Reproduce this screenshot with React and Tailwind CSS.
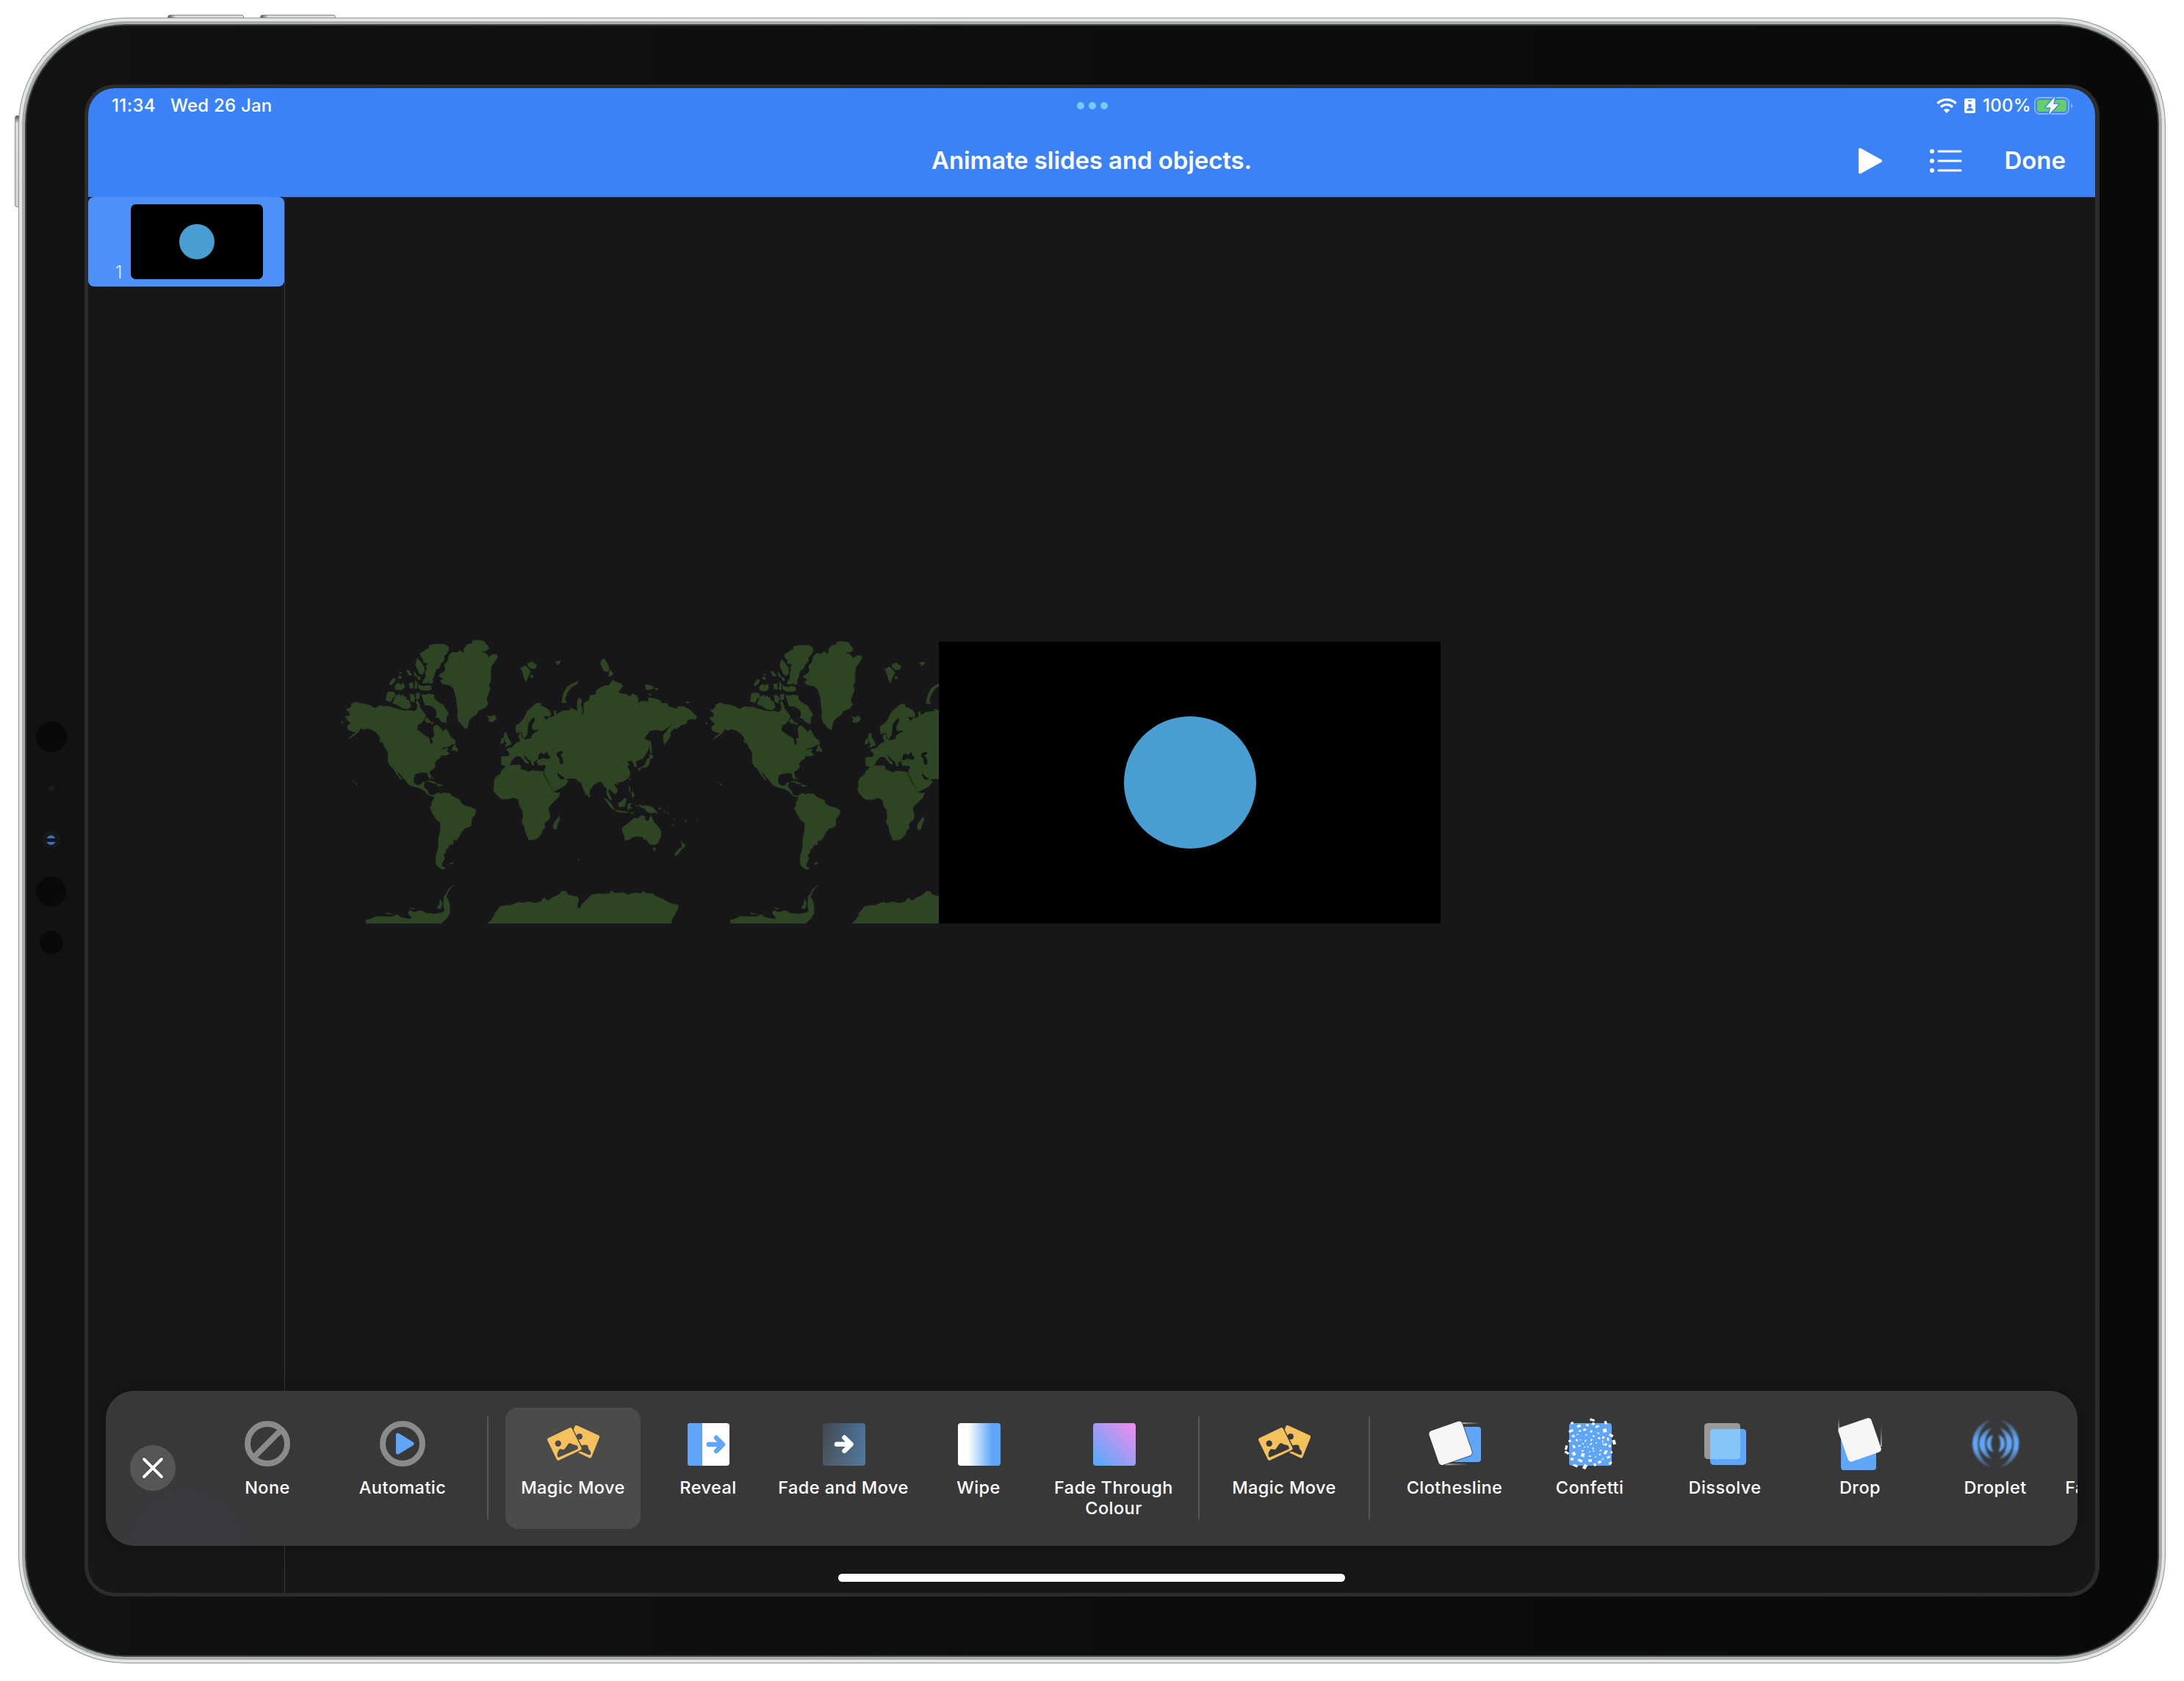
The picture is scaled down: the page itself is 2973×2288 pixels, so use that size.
import React from "react";

const LAND = [
  // North America
  "M92,345 L103,342 112,332 110,325 130,316 145,322 165,324 185,330 205,342 225,331 240,334 258,333 275,340 295,345 320,352 345,350 358,355 370,348 372,330 365,318 372,308 380,325 383,340 392,352 400,362 406,372 398,390 388,402 375,408 370,430 385,440 405,455 418,462 424,488 430,490 433,475 428,465 440,458 438,440 435,425 440,412 452,410 465,425 475,436 485,425 497,445 505,460 520,472 523,485 510,490 490,500 475,502 466,512 480,507 494,505 488,518 500,528 485,535 466,533 462,545 450,552 440,565 444,578 436,590 422,598 420,608 427,622 422,632 414,618 412,605 395,604 380,606 362,612 357,632 360,648 372,656 386,655 392,645 402,642 396,656 402,668 412,678 415,690 425,697 437,697 432,702 420,698 408,690 402,680 385,670 370,665 350,660 335,650 325,636 312,622 300,606 290,596 296,612 312,632 305,632 290,610 278,590 264,576 256,560 256,520 248,508 240,490 228,475 222,455 208,440 190,428 170,424 155,430 150,420 140,438 120,455 98,468 115,452 130,440 118,438 98,430 95,415 110,402 100,395 88,380 90,375 105,372 103,358 92,350Z",
  "M222,470l6,4-2,10z M238,492l12,8 8,12-10-4z M512,502l8,-14 4,12 8,8 -2,10 -10,-4 -12,0z",
  // Arctic archipelago
  "M383,118 L400,108 408,100 418,98 420,85 440,80 480,80 495,90 496,105 488,120 478,128 478,145 465,160 458,178 445,185 440,205 432,225 418,235 405,240 392,238 398,225 405,215 404,195 410,180 405,170 415,160 405,155 395,155 395,140 385,130Z",
  "M372,138 L382,148 390,160 400,175 400,190 392,205 380,200 372,180 364,165Z",
  "M376,244 l10,6 12,2 10,-4 18,3 3,13 -15,6 -25,-2 -12,-8z M418,232l16,-4 0,10 -14,4z",
  "M262,240 l14,-20 10,2 -8,18 -12,8z M283,250 l14,-12 8,8 12,-8 5,18 -12,12 -25,-3z M340,240l14,-4 2,24 -14,0z M328,185 l12,4 12,18 -14,0z M297,210l8,0 6,6 -6,5 -8,-2z M300,196 l6,0 4,5 -8,0z M364,228 l8,14 -2,20 -8,0z M356,190 l8,8 8,15 -10,-3z M372,210 l10,4 2,12 -10,-2z",
  "M258,274 l22,2 6,12 -12,14 -8,14 -18,-6 4,-30z",
  "M285,292 l18,-8 4,10 8,-8 4,10 6,-4 4,14 12,6 6,24 -14,10 -20,-4 -20,-14 -18,-6 6,-16z",
  "M342,284l14,2 8,14 -6,18 -12,-6z M366,282l16,-2 -2,22 -12,4z",
  "M388,285 l18,2 12,-4 20,4 0,14 14,14 12,8 12,6 6,14 8,10 6,14 -8,8 -2,28 -20,-8 -10,-14 -12,-2 6,-14 -6,-20 -20,-14 -22,-2 -6,-16z",
  "M402,388 l10,-8 6,10 8,8 -10,4 -10,-4z M425,398l12,2 -8,8z",
  // Greenland and Iceland
  "M455,208 L475,195 L483,185 478,165 492,150 497,125 510,113 530,115 540,105 555,118 558,95 572,80 588,78 590,67 605,64 635,68 648,85 656,97 645,107 620,110 640,116 650,125 652,135 670,122 685,122 690,132 680,150 665,168 662,195 662,232 655,245 660,262 650,290 645,305 652,325 640,340 615,350 605,368 588,378 578,390 572,410 568,427 555,420 545,405 535,395 530,375 532,350 528,330 528,320 525,295 515,262 500,248 472,243 462,230 475,222z",
  "M648,372 l12,4 10,-4 5,-3 8,8 0,10 -14,11 -16,-3 2,-12z",
  // South America and the Caribbean
  "M437,697 L448,690 460,686 462,694 475,688 500,690 510,702 525,708 540,715 545,730 560,740 585,746 603,757 602,772 587,792 585,820 578,826 560,832 548,845 540,862 528,880 514,882 514,897 498,900 494,912 484,920 484,932 474,940 480,955 472,970 468,985 484,996 470,1000 452,988 445,975 446,945 455,910 456,870 462,845 464,810 446,795 432,770 422,748 430,735 428,725 438,710z",
  "M502,973 l10,-2 0,6 -10,2z M408,640 l14,-3 15,5 12,7 -14,0 -12,-7z M448,652 l18,2 6,3 -18,3z M117,640l6,3-2,3z M128,647l7,5-5,2z M432,622l4,6-4,2z",
  // Africa
  "M720,580 L738,575 778,573 782,582 780,590 800,596 812,602 825,596 868,600 872,615 885,640 900,665 908,682 925,688 937,685 930,705 910,725 895,740 890,755 895,770 896,792 880,806 874,815 876,830 866,840 862,855 848,872 835,878 812,880 808,868 800,850 795,825 785,805 790,785 788,758 775,738 772,715 752,706 735,712 705,713 690,700 675,682 673,670 676,655 675,640 684,622 700,610 705,596 715,588z",
  "M932,783 l3,12 -8,22 -5,18 -10,2 -4,-12 4,-16 8,-10z",
  // Eurasia
  "M705,572 L703,540 L728,538 735,535 735,522 723,512 728,506 745,502 755,492 765,482 778,478 778,470 772,458 776,446 782,444 785,462 800,470 820,466 828,448 850,434 850,428 830,432 825,415 838,390 836,378 826,382 810,405 808,430 805,450 795,465 788,455 786,440 775,440 765,445 761,428 762,412 775,404 790,388 798,372 808,352 822,340 838,325 850,320 860,322 860,332 880,340 895,352 900,368 895,375 880,374 870,372 875,382 884,392 890,380 905,378 914,372 912,355 920,352 922,368 940,355 960,352 978,350 975,340 1000,350 1007,355 1003,335 1005,310 1013,298 1022,310 1018,330 1025,345 1020,375 1030,360 1030,320 1050,310 1055,290 1078,285 1078,270 1095,258 1115,250 1130,248 1145,225 1155,235 1175,240 1185,250 1175,265 1165,275 1180,283 1200,285 1205,292 1218,290 1220,283 1240,290 1245,305 1245,320 1260,312 1285,315 1285,298 1310,302 1330,310 1340,322 1360,322 1365,335 1400,345 1402,335 1425,335 1445,345 1462,362 1470,368 1477,378 1470,388 1455,385 1440,390 1435,405 1415,410 1400,425 1385,425 1372,440 1372,455 1360,475 1350,490 1344,470 1345,450 1355,440 1375,410 1378,405 1360,422 1340,435 1315,430 1290,435 1280,450 1268,466 1285,475 1290,490 1285,510 1275,530 1265,545 1245,555 1235,560 1240,580 1228,580 1225,565 1218,555 1200,558 1210,572 1202,580 1212,600 1212,615 1205,628 1188,640 1168,645 1158,645 1150,655 1162,672 1162,685 1152,692 1140,680 1130,672 1125,680 1135,700 1142,720 1130,712 1120,690 1122,672 1112,662 1105,648 1095,640 1080,648 1068,655 1055,675 1052,690 1040,698 1030,675 1022,655 1020,645 1008,640 1000,630 980,628 960,630 968,640 955,658 935,670 910,682 902,665 890,640 875,612 873,600 880,580 876,574 850,574 845,562 848,550 838,558 830,562 835,575 825,574 820,558 805,545 790,528 795,545 810,560 812,568 800,566 790,552 778,538 765,537 755,545 745,556 740,570 728,578 715,577z",
  // Islands of the North Atlantic and Arctic Ocean
  "M718,440 l8,4 2,14 12,20 4,12 -16,6 -10,4 6,-14 -6,-12 -4,-16z M705,465 l10,-2 -2,20 -12,4 2,-12z",
  "M780,178 l20,-10 10,12 10,12 -10,20 -8,22 -8,-14 -6,-24z M808,158 l18,-6 18,14 -6,14 -18,0 -10,-10z M820,205 l10,4 -2,10 -8,-2z M916,152l20,-4 0,8 -10,10 -4,-8z",
  "M1007,232 l-2,10 -22,12 -16,20 -12,30 6,16 -18,-2 6,-34 14,-28 20,-14z",
  "M1110,138 l14,22 6,20 -6,14 -16,-6 -12,-30 4,-12z M1132,184 l16,16 -10,10 -10,2z",
  "M1272,245 l14,2 16,6 0,10 -24,4z M1308,260l16,2 -4,8z M1286,282l12,4-8,4z M1434,316l14,0 -6,6 -8,-2z M70,396l10,4-4,4z",
  // East and South-East Asia
  "M1288,472 l6,4 4,30 0,28 -6,-14 -2,-24z M1288,532 l16,4 -2,10 -12,2z M1292,545 l-4,28 -8,8 -20,4 -12,12 -4,-8 16,-8 14,-12 6,-20z",
  "M1210,628l4,0-2,12z M1050,690l6,8 -4,8-5,-4z M1208,658l6,8 -2,14 6,10 -8,-8z M1222,680 l8,18 -8,10 -2,-12z M1158,650l8,-2-4,8z",
  "M1110,708 l14,8 14,16 14,24 -8,-2 -16,-18z M1152,757 l24,4 30,4 -2,4 -40,-4z M1165,730 l14,-6 12,-16 8,6 -4,16 -4,14 -22,0z M1204,732l16,-2 -8,8 8,14 -10,-4 -2,10 -4,-2z M1212,768l18,0 -10,4z",
  "M1250,735 l12,6 14,-2 24,6 14,14 10,14 -14,-6 -14,4 -16,-6 -10,-14 -18,-6z M1330,748l8,4-14,4z M1345,758l8,6-5,1z M1360,767l8,4-5,1z M1387,792l4,5-3,2z M1378,814l10,7-4,1z M1438,797l-8,10-1,-4z M1478,798l4,2-3,2z M1236,738l10,2-6,4z",
  // Oceania
  "M1182,828 L1205,812 1220,798 1232,790 1245,792 1255,780 1272,782 1270,795 1285,805 1290,790 1295,778 1300,792 1308,808 1322,822 1335,842 1335,865 1328,880 1320,895 1305,900 1290,896 1282,885 1274,875 1270,880 1262,868 1245,865 1225,868 1210,878 1192,882 1190,862 1182,845z",
  "M1304,912l10,0-3,14-6,-4z M1414,884 l8,10 10,6 -8,14 -8,2 2,-14z M1410,912 l8,4 -14,20 -8,8 -8,-2 4,-10z M1007,958l5,2-3,5z",
  // Antarctica
  "M168,1207 L185,1203 210,1192 270,1193 293,1184 305,1195 325,1200 347,1203 348,1195 336,1180 340,1167 360,1175 385,1168 410,1180 440,1182 465,1178 480,1170 475,1150 477,1110 485,1100 495,1080 516,1064 500,1080 490,1100 486,1112 496,1128 500,1150 500,1180 488,1200 466,1221 172,1221z",
  "M450,1156 l10,-16 2,-18 8,12 -2,20 -8,8z M342,1157l20,2 -6,4z M248,1177l26,4 -20,2z",
  "M648,1221 L665,1206 678,1185 676,1180 690,1165 700,1150 720,1148 745,1145 775,1133 785,1138 810,1132 840,1138 862,1130 872,1116 888,1128 910,1112 930,1104 945,1088 960,1090 968,1104 1005,1112 1010,1120 1003,1155 1015,1160 1022,1142 1045,1120 1060,1104 1080,1100 1115,1100 1130,1100 1140,1087 1150,1098 1180,1094 1205,1103 1230,1096 1255,1098 1268,1090 1275,1098 1302,1098 1310,1108 1340,1120 1365,1135 1385,1142 1402,1145 1404,1155 1395,1175 1380,1200 1376,1221z",
].join(" ");

const INLAND_SEAS =
  "M848,548 L852,530 862,522 870,530 885,518 888,530 898,542 890,550 870,545 855,552z M925,522 l18,-6 6,8 -12,8 10,16 2,18 -8,6 -8,-10 0,-16 -10,-10z M928,605 l14,14 12,8 -4,6 -14,-4 -10,-16z";

function WorldMap() {
  return (
    <svg className="block h-[390px] w-[838px]" viewBox="440 868 838 390">
      <defs>
        <g id="world">
          <path d={LAND} fill="#2e4524" stroke="#2e4524" strokeWidth="1.5" strokeLinejoin="round" />
          <path d={INLAND_SEAS} fill="#171719" />
        </g>
        <clipPath id="mapclip">
          <rect x="440" y="868" width="838" height="389" />
        </clipPath>
      </defs>
      <g clipPath="url(#mapclip)">
        <use href="#world" transform="translate(440 850) scale(0.34439 0.33333)" />
        <use href="#world" transform="translate(935.9 851.7) scale(0.34439 0.3319)" />
      </g>
    </svg>
  );
}

const BLUE = "#5fa6f8";

function NoneIcon() {
  return (
    <g fill="none" stroke="#8a8a8a" strokeWidth="8">
      <circle cx="40" cy="40" r="27" />
      <path d="M21 59L59 21" />
    </g>
  );
}

function AutomaticIcon() {
  return (
    <g>
      <circle cx="40" cy="40" r="27" fill="none" stroke="#8a8a8a" strokeWidth="8" />
      <path d="M33.4 28L53 40 33.4 52Z" fill={BLUE} stroke={BLUE} strokeWidth="5" strokeLinejoin="round" />
    </g>
  );
}

function MagicMoveIcon({ id }) {
  return (
    <g>
      <mask id={id + "b"}>
        <rect width="80" height="80" fill="white" />
        <path d="M7 34.5L36.2 20.2 49.6 46.6 20 60.5Z" fill="black" stroke="black" strokeWidth="7.5" strokeLinejoin="round" />
        <circle cx="48.8" cy="30.3" r="4.1" fill="black" />
        <path d="M44 45L52 42.3Q57 40.8 60 42.3L61.4 47.5Q65 50.5 64 54.2 63.2 56 60.8 55L48 49.6Z" fill="black" />
      </mask>
      <mask id={id + "f"}>
        <rect width="80" height="80" fill="white" />
        <circle cx="19.7" cy="39.7" r="4.2" fill="black" />
        <path d="M18.6 56.5Q18.6 50 22 47.2L28 47.9Q31 44 34 39.8 36 38.2 38.6 40.4L45.4 42.4Q48.4 46 45.6 47.8L21.4 58.3Q19 59.2 18.6 56.5Z" fill="black" />
      </mask>
      <path d="M44.6 17.6L73.6 30.8 63 57 36 44Z" fill="#f5c15c" stroke="#f5c15c" strokeWidth="5" strokeLinejoin="round" mask={`url(#${id}b)`} />
      <path d="M7.6 34.6L36.4 20.7 49 46.4 20 60.2Z" fill="#f5c15c" stroke="#f5c15c" strokeWidth="5" strokeLinejoin="round" mask={`url(#${id}f)`} />
    </g>
  );
}

function RevealIcon() {
  return (
    <g>
      <rect x="12" y="12" width="57" height="58" rx="4" fill="#fff" />
      <path d="M32 12H16a4 4 0 0 0-4 4V66a4 4 0 0 0 4 4H32Z" fill={BLUE} />
      <path d="M40.8 41H59M51 32L60 41 51 50" fill="none" stroke={BLUE} strokeWidth="6.4" strokeLinecap="round" strokeLinejoin="round" />
    </g>
  );
}

function FadeMoveIcon() {
  return (
    <g>
      <linearGradient id="fm1" x1="0" y1="0.1" x2="1" y2="0">
        <stop offset="0" stopColor="#3f484e" />
        <stop offset="1" stopColor="#4a7199" />
      </linearGradient>
      <linearGradient id="fm2" x1="0" y1="0" x2="0" y2="1">
        <stop offset="0" stopColor="#8aa4c8" stopOpacity="0" />
        <stop offset="1" stopColor="#8aa4c8" stopOpacity="0.2" />
      </linearGradient>
      <rect x="12" y="12" width="58" height="58" rx="4" fill="url(#fm1)" />
      <rect x="12" y="12" width="58" height="58" rx="4" fill="url(#fm2)" />
      <path d="M31 40.7H49.5M41.5 31.7L50.6 40.7 41.5 49.7" fill="none" stroke="#fff" strokeWidth="6.4" strokeLinecap="round" strokeLinejoin="round" />
    </g>
  );
}

function WipeIcon() {
  return (
    <g>
      <linearGradient id="wp">
        <stop offset="0.24" stopColor="#fff" />
        <stop offset="0.8" stopColor={BLUE} />
      </linearGradient>
      <rect x="12" y="12" width="58" height="58" rx="4" fill="url(#wp)" />
    </g>
  );
}

function FadeColourIcon() {
  return (
    <g>
      <linearGradient id="fc" x1="0" y1="1" x2="1" y2="0">
        <stop offset="0.1" stopColor="#5fa8f9" />
        <stop offset="0.9" stopColor="#e390ef" />
      </linearGradient>
      <rect x="12" y="12" width="58" height="58" rx="4" fill="url(#fc)" />
    </g>
  );
}

function ClotheslineIcon() {
  return (
    <g>
      <linearGradient id="cl">
        <stop offset="0" stopColor="#aaa" />
        <stop offset="1" stopColor="#aaa" stopOpacity="0" />
      </linearGradient>
      <rect x="51" y="11" width="23" height="2.2" fill="url(#cl)" />
      <rect x="27" y="67" width="32" height="2.2" fill="url(#cl)" />
      <rect x="28" y="17" width="48" height="48" rx="4" fill={BLUE} />
      <rect x="10.8" y="14.8" width="47.6" height="49" rx="4.5" transform="rotate(-19 34.6 39.3)" fill="#f6f6f6" stroke="#383838" strokeWidth="1.6" paintOrder="stroke" />
    </g>
  );
}

// [centre x, centre y, width, height, rotation]
const CONFETTI = [
  [805, 158, 18, 9, 18], [728, 171, 10, 9, -20], [856, 169, 9, 13, -20], [809, 174, 10, 11, 25], [786, 179, 11, 7, 10],
  [754, 183, 14, 10, -25], [824, 185, 14, 8, -25], [724, 203, 17, 9, -25], [758, 203, 8, 7, 0], [776, 198, 11, 9, -20],
  [801, 205, 7, 9, 20], [828, 212, 9, 5, 15], [853, 201, 14, 14, -10], [877, 221, 16, 10, 30], [888, 249, 12, 18, -15],
  [733, 224, 10, 9, 30], [749, 217, 5, 5, 45], [782, 219, 6, 5, 0], [810, 224, 7, 6, 20], [831, 232, 8, 8, -15],
  [847, 230, 9, 9, 15], [865, 237, 7, 12, -10], [719, 244, 9, 9, 0], [746, 241, 7, 9, -15], [760, 239, 4, 4, 0],
  [779, 243, 4, 9, 25], [802, 240, 6, 8, 20], [845, 246, 4, 10, -10], [770, 255, 5, 5, 20], [800, 256, 9, 5, -35],
  [821, 252, 4, 6, -15], [856, 258, 9, 9, 20], [847, 258, 4, 7, -20], [872, 265, 9, 9, 10], [706, 271, 9, 18, 12],
  [735, 267, 9, 12, -25], [756, 264, 9, 5, 15], [775, 269, 5, 4, 0], [788, 268, 4, 6, 0], [808, 274, 6, 6, 30],
  [708, 292, 17, 9, 32], [735, 296, 12, 14, -20], [768, 284, 7, 7, 0], [769, 301, 13, 14, 15], [796, 288, 5, 4, 0],
  [810, 285, 5, 5, 0], [837, 283, 8, 5, -20], [856, 290, 10, 17, 30], [878, 290, 8, 8, 20], [796, 306, 8, 6, 10],
  [818, 309, 5, 5, 20], [834, 299, 5, 8, 20], [728, 318, 11, 10, 15], [759, 324, 17, 10, 30], [797, 324, 13, 10, 0],
  [833, 330, 13, 10, -30], [845, 318, 8, 4, -35], [867, 310, 13, 8, -25], [874, 334, 9, 13, 35], [741, 345, 17, 9, 22],
  [777, 349, 13, 19, 30], [815, 341, 9, 12, -25],
];

function ConfettiIcon() {
  return (
    <g>
      <rect x="12" y="12" width="58" height="58" rx="4" fill={BLUE} />
      <g transform="scale(0.35714 0.33333) translate(-683.2 -135)" fill="#fff">
        {CONFETTI.map(([x, y, w, h, r]) => (
          <rect key={x + "-" + y} x={x - w / 2} y={y - h / 2} width={w} height={h} transform={`rotate(${r} ${x} ${y})`} />
        ))}
      </g>
    </g>
  );
}

function DissolveIcon() {
  return (
    <g>
      <rect x="12" y="12" width="49" height="49" rx="4.5" fill="#999" />
      <rect x="20" y="20" width="49" height="49" rx="4.5" fill={BLUE} />
      <path d="M24.5 20H61V56.5a4.5 4.5 0 0 1-4.5 4.5H20V24.5a4.5 4.5 0 0 1 4.5-4.5Z" fill="#83c5f9" />
    </g>
  );
}

function DropIcon() {
  return (
    <g>
      <linearGradient id="dr" x1="0" y1="1" x2="0" y2="0">
        <stop offset="0" stopColor="#bbb" />
        <stop offset="1" stopColor="#bbb" stopOpacity="0" />
      </linearGradient>
      <rect x="10.2" y="6" width="1.6" height="14" fill="url(#dr)" />
      <rect x="68" y="16" width="1.6" height="28" fill="url(#dr)" />
      <rect x="14" y="28" width="48" height="48" rx="4" fill={BLUE} />
      <rect x="15.7" y="10.2" width="47.6" height="49" rx="4.5" transform="rotate(-19 39.5 34.7)" fill="#f6f6f6" />
    </g>
  );
}

function Ripples() {
  return (
    <g>
      <path d="M33 8A33.2 33.2 0 0 0 33 71.5 38 38 0 0 1 33 8Z" />
      <path d="M34 19.5A21 21 0 0 0 34 60 29 29 0 0 1 34 19.5Z" />
      <path d="M36.500 28.500A12 12 0 0 0 36.500 51 26 26 0 0 1 36.500 28.500Z" />
    </g>
  );
}

function DropletIcon() {
  return (
    <g>
      <linearGradient id="dp" gradientUnits="userSpaceOnUse" x1="0" y1="7" x2="0" y2="73">
        <stop offset="0" stopColor={BLUE} stopOpacity="0.2" />
        <stop offset="0.4" stopColor={BLUE} />
        <stop offset="0.6" stopColor={BLUE} />
        <stop offset="1" stopColor={BLUE} stopOpacity="0.2" />
      </linearGradient>
      <filter id="dpb">
        <feGaussianBlur stdDeviation="0.9" />
      </filter>
      <g fill="url(#dp)" stroke="url(#dp)" strokeWidth="0.8" filter="url(#dpb)">
        <Ripples />
        <g transform="translate(81.4 0) scale(-1 1)">
          <Ripples />
        </g>
      </g>
    </g>
  );
}

function Effect({ label, selected, children }) {
  return (
    <div
      className={
        "flex h-[165px] w-[184px] shrink-0 flex-col items-center rounded-[17px] pt-[9px] " +
        (selected ? "bg-[#4b4b4b]" : "")
      }
    >
      <svg className="h-[80px] w-[80px] shrink-0" viewBox="0 0 80 80">{children}</svg>
      <div className="mt-[6px] text-center text-[23.5px] leading-[28px] font-[460] tracking-[0.45px] whitespace-pre text-white">
        {label}
      </div>
    </div>
  );
}

function Divider() {
  return <div className="mx-[23px] mt-[12px] h-[141px] w-[2px] shrink-0 bg-[#555555]" />;
}

function StatusBar() {
  return (
    <div className="flex h-[48px] items-center px-[30px] text-[24px] font-[460] text-white">
      <div className="flex flex-1 gap-[20px] pl-[2px] tracking-[0.4px]">
        <span>11:34</span>
        <span className="tracking-[0.2px]">Wed 26 Jan</span>
      </div>
      <div className="flex gap-[6px]">
        <span className="size-[10px] rounded-full bg-[#77c9ff]" />
        <span className="size-[10px] rounded-full bg-[#77c9ff]" />
        <span className="size-[10px] rounded-full bg-[#77c9ff]" />
      </div>
      <div className="flex flex-1 items-center justify-end">
        <svg className="h-[20px] w-[28px]" viewBox="0 0 28 20" fill="none" stroke="#fff" strokeWidth="3.4">
          <path d="M1.4 6.8A18 18 0 0 1 26.6 6.8" />
          <path d="M6 11.7A11.3 11.3 0 0 1 22 11.7" />
          <path d="M14 20L9.7 15.8A6.2 6.2 0 0 1 18.3 15.8Z" fill="#fff" stroke="none" />
        </svg>
        <svg className="ml-[10px] h-[20px] w-[15px]" viewBox="0 0 15 20">
          <rect width="15" height="20" rx="2.5" fill="#fff" />
          <rect x="4.8" y="2.2" width="5.4" height="1.5" rx="0.7" fill="#3b82f6" />
          <circle cx="7.5" cy="10" r="2.4" fill="#3b82f6" />
          <path d="M3 16.8Q3 13 7.5 13T12 16.8Z" fill="#3b82f6" />
        </svg>
        <span className="ml-[10px] w-[65px] tracking-[0.3px]">100%</span>
        <svg className="ml-[5px] h-[24px] w-[53px] overflow-visible" viewBox="0 0 53 24">
          <rect x="1" y="1" width="46" height="22" rx="6.5" fill="none" stroke="#86b3fa" strokeWidth="2" />
          <rect x="4" y="4" width="40" height="16" rx="3" fill="#67ce67" />
          <path d="M50 8.5Q55 12 50 15.5Z" fill="#86b3fa" />
          <path d="M28.3 -0.3L15.5 14.2H22.3L20 24.3 33.2 9.8H26.2Z" fill="#fff" stroke="#3b82f6" strokeWidth="2.8" paintOrder="stroke" strokeLinejoin="round" />
        </svg>
      </div>
    </div>
  );
}

function TitleBar() {
  return (
    <div className="flex h-[100px] items-center px-[40px] pt-[1px] text-[33px] font-semibold text-white">
      <div className="flex-1" />
      <span className="tracking-[-0.1px]">Animate slides and objects.</span>
      <div className="flex flex-1 items-center justify-end">
        <svg className="h-[38px] w-[34px]" viewBox="0 0 34 38">
          <path d="M3 3.5L31 19 3 34.5Z" fill="#fff" stroke="#fff" strokeWidth="4" strokeLinejoin="round" />
        </svg>
        <svg className="ml-[64px] h-[32px] w-[44px]" viewBox="0 0 44 32" fill="#fff">
          <circle cx="3" cy="3" r="3" />
          <circle cx="3" cy="16" r="3" />
          <circle cx="3" cy="29" r="3" />
          <rect x="10.5" y="1.5" width="33" height="3" rx="1.5" />
          <rect x="10.5" y="14.5" width="33" height="3" rx="1.5" />
          <rect x="10.5" y="27.5" width="33" height="3" rx="1.5" />
        </svg>
        <span className="ml-[57px]">Done</span>
      </div>
    </div>
  );
}

function FrontSensors() {
  return (
    <div className="flex w-[79px] shrink-0 flex-col items-center pt-[947px] pr-[12px]">
      <div className="size-[42px] rounded-full bg-[#090909]" />
      <div className="mt-[45px] size-[8px] rounded-full bg-[#1c1c1c]" />
      <div className="mt-[54px] flex size-[24px] items-center justify-center rounded-full bg-[#17181a]">
        <div className="flex size-[13px] flex-col justify-between overflow-hidden rounded-full bg-[#10152a]">
          <div className="h-[4px] bg-[#3f72b8]" />
          <div className="h-[4px] bg-[#3f72b8]" />
        </div>
      </div>
      <div className="mt-[38px] size-[41px] rounded-full bg-[#090909]" />
      <div className="mt-[33px] size-[32px] rounded-full bg-[#090909]" />
    </div>
  );
}

export default function App() {
  return (
    <div className="relative h-[2288px] w-[2973px] overflow-hidden bg-white pt-[24px] pl-[25px] font-['Inter',sans-serif]">
      <div className="absolute top-[20px] left-[228px] h-[8px] w-[104px] rounded-[3px] border border-[#8c8e8d] bg-linear-to-r from-[#555] via-[#d8dad9] via-10% to-[#d8dad9]" />
      <div className="absolute top-[20px] left-[354px] h-[8px] w-[103px] rounded-[3px] border border-[#8c8e8d] bg-linear-to-r from-[#555] via-[#d8dad9] via-10% to-[#d8dad9]" />
      <div className="absolute top-[157px] left-[20px] h-[125px] w-[8px] rounded-[3px] border border-[#8c8e8d] bg-linear-to-b from-[#555] via-[#dcdedd] via-8% to-[#d0d2d1]" />
      <div className="relative h-[2240px] w-[2923px] rounded-[146px] bg-[#8f9291] p-[1px]">
        <div className="size-full rounded-[145px] bg-[#e2e5e4] p-[4px]">
          <div className="size-full rounded-[141px] bg-[#a6aaa9] p-[4px]">
            <div className="size-full rounded-[137px] bg-[#3b3e3e] p-[2px]">
              <div className="flex size-full rounded-[135px] bg-linear-to-r from-[#121212] to-[#090909]">
                <FrontSensors />
                <div className="mt-[80px] h-[2058px] w-[2743px] shrink-0 rounded-[41px] bg-[#2c2c2c] pt-[5px] pl-[5px]">
                  <div className="relative flex h-[2048px] w-[2732px] flex-col overflow-hidden rounded-[36px] bg-[#171719]">
                    <header className="h-[148px] shrink-0 bg-[#3b82f6]">
                      <StatusBar />
                      <TitleBar />
                    </header>
                    <div className="flex flex-1">
                      <aside className="w-[268px] shrink-0 border-r border-[#39393b]">
                        <div className="flex h-[122px] items-end rounded-[8px] bg-[#4d90f8] pb-[10px] pl-[37px]">
                          <span className="mb-[-3px] w-[21px] text-[24px] leading-[24px] font-light text-[#e6f0ff]">1</span>
                          <div className="flex h-[102px] w-[180px] items-center justify-center rounded-[7px] bg-black">
                            <div className="size-[48px] rounded-full bg-[#489dd2]" />
                          </div>
                        </div>
                      </aside>
                      <main className="flex flex-1 items-start border-t border-[#353537] pt-[599px] pl-[52px]">
                        <WorldMap />
                        <div className="mt-[5px] flex h-[384px] w-[683px] items-center justify-center bg-black">
                          <div className="size-[180px] rounded-full bg-[#489dd2]" />
                        </div>
                      </main>
                    </div>
                    <div className="absolute top-[1773px] left-[24px] flex h-[211px] w-[2684px] overflow-hidden rounded-[38px] bg-[#383838] bg-[radial-gradient(circle_at_110px_210px,#3a3b40_0%,#38393b_90px,#383838_150px)] pl-[33px] shadow-[0_0_24px_rgba(0,0,0,0.35)]">
                      <div className="mt-[74px] flex size-[62px] shrink-0 items-center justify-center rounded-full bg-[#565656]">
                        <svg className="size-[34px]" viewBox="0 0 34 34" fill="none" strokeLinecap="round">
                          <path d="M5 5L29 29M29 5L5 29" stroke="#454545" strokeWidth="6" />
                          <path d="M5 5L29 29M29 5L5 29" stroke="#fff" strokeWidth="4" />
                        </svg>
                      </div>
                      <div className="mt-[23px] ml-[33px] flex">
                        <Effect label="None"><NoneIcon /></Effect>
                        <Effect label="Automatic"><AutomaticIcon /></Effect>
                        <Divider />
                        <Effect label="Magic Move" selected><MagicMoveIcon id="ma" /></Effect>
                        <Effect label="Reveal"><RevealIcon /></Effect>
                        <Effect label="Fade and Move"><FadeMoveIcon /></Effect>
                        <Effect label="Wipe"><WipeIcon /></Effect>
                        <Effect label={"Fade Through\nColour"}><FadeColourIcon /></Effect>
                        <Divider />
                        <Effect label="Magic Move"><MagicMoveIcon id="mb" /></Effect>
                        <Divider />
                        <Effect label="Clothesline"><ClotheslineIcon /></Effect>
                        <Effect label="Confetti"><ConfettiIcon /></Effect>
                        <Effect label="Dissolve"><DissolveIcon /></Effect>
                        <Effect label="Drop"><DropIcon /></Effect>
                        <Effect label="Droplet"><DropletIcon /></Effect>
                        <Effect label="Fade and Move" />
                      </div>
                    </div>
                    <div className="absolute top-[2022px] left-[1021px] h-[11px] w-[690px] rounded-full bg-white" />
                  </div>
                </div>
              </div>
            </div>
          </div>
        </div>
      </div>
    </div>
  );
}
